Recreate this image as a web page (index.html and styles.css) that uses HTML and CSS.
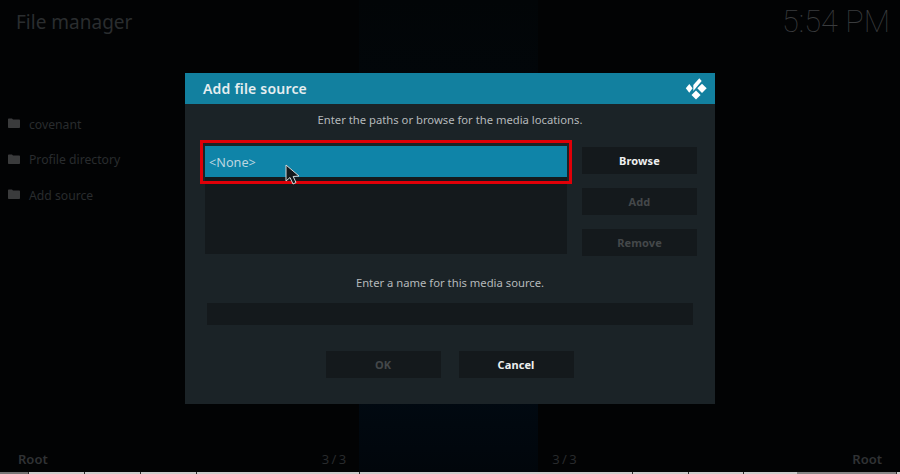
FILE: index.html
```html
<!DOCTYPE html>
<html lang="en">
  <head>
    <meta charset="UTF-8" />
    <meta name="viewport" content="width=device-width, initial-scale=1.0" />
    <title>Add file source</title>
    <link rel="stylesheet" href="styles.css">
  </head>
  <body>
    <div class="screen">
      <div class="backdrop-panel"></div>

      <div class="page">
        <div class="topbar">
          <div class="page-title">File manager</div>
          <div class="clock">5:54 PM</div>
        </div>

        <div class="sources">
          <div class="source">
            <svg class="folder" viewBox="0 0 12 10"><path d="M0 1.5 C0 .8 .4 .5 1 .5 H4 L5 1.6 H11 C11.6 1.6 12 2 12 2.6 V9 C12 9.6 11.6 10 11 10 H1 C.4 10 0 9.6 0 9 Z" /></svg>
            <span>covenant</span>
          </div>
          <div class="source">
            <svg class="folder" viewBox="0 0 12 10"><path d="M0 1.5 C0 .8 .4 .5 1 .5 H4 L5 1.6 H11 C11.6 1.6 12 2 12 2.6 V9 C12 9.6 11.6 10 11 10 H1 C.4 10 0 9.6 0 9 Z" /></svg>
            <span>Profile directory</span>
          </div>
          <div class="source">
            <svg class="folder" viewBox="0 0 12 10"><path d="M0 1.5 C0 .8 .4 .5 1 .5 H4 L5 1.6 H11 C11.6 1.6 12 2 12 2.6 V9 C12 9.6 11.6 10 11 10 H1 C.4 10 0 9.6 0 9 Z" /></svg>
            <span>Add source</span>
          </div>
        </div>

        <div class="footer">
          <span class="footer-path">Root</span>
          <span class="footer-count">3 / 3</span>
          <span class="footer-count footer-count-right">3 / 3</span>
          <span class="footer-path footer-path-right">Root</span>
        </div>
        <div class="strip"></div>
      </div>

      <div class="dialog">
        <div class="dialog-header">
          <h1>Add file source</h1>
          <svg class="logo" viewBox="0 0 22 22">
            <path d="M0.8 10.3 L4.3 6 L7.6 10.3 L4.3 14.8 Z" />
            <path d="M8.3 7 L14.3 0.3 L16.7 3 L8.3 13 Z" />
            <path d="M12.3 10.3 L17 5.7 L21.7 10.3 L17 15 Z" />
            <path d="M6.5 17 L11 12.4 L15.6 17 L11 21.6 Z" />
          </svg>
        </div>

        <div class="dialog-body">
          <p class="hint">Enter the paths or browse for the media locations.</p>

          <div class="paths-row">
            <div class="paths">
              <div class="path-selected">&lt;None&gt;</div>
            </div>
            <div class="side-buttons">
              <button class="btn">Browse</button>
              <button class="btn btn-off">Add</button>
              <button class="btn btn-off">Remove</button>
            </div>
          </div>

          <p class="hint hint-name">Enter a name for this media source.</p>
          <div class="name-input"></div>

          <div class="dialog-actions">
            <button class="btn btn-off">OK</button>
            <button class="btn">Cancel</button>
          </div>
        </div>

        <div class="callout"></div>
      </div>

      <svg class="cursor" viewBox="0 0 16 24">
        <path d="M1 1 L1 17 L5 13.5 L8 20 L11 18.5 L8.2 12.5 L14 12 Z" />
      </svg>
    </div>
  </body>
</html>
```

FILE: styles.css
```css
body {
  margin: 0;
  background-color: #000;
  font-family: "Noto Sans", "Open Sans", sans-serif;
}
.screen {
  position: relative;
  width: 900px;
  height: 474px;
  overflow: hidden;
  background-color: #020304;
}
.backdrop-panel {
  position: absolute;
  top: 0;
  left: 359px;
  width: 179px;
  height: 472px;
  background-image: linear-gradient(#020507, #010a13 80%, #01060b);
}
.page {
  position: relative;
  display: flex;
  flex-direction: column;
  height: 474px;
}
.topbar {
  display: flex;
  justify-content: space-between;
  align-items: flex-start;
  height: 100px;
  padding: 0 10px 0 16px;
}
.page-title {
  margin-top: 7px;
  font-size: 19px;
  line-height: 30px;
  color: #2a2d2f;
}
.clock {
  margin-top: 4px;
  font-family: Roboto, sans-serif;
  font-weight: 100;
  font-size: 30.7px;
  line-height: 36px;
  color: #3a3c3e;
}
.sources {
  display: flex;
  flex-direction: column;
  gap: 15.5px;
  padding: 14px 0 0 8px;
}
.source {
  display: flex;
  align-items: center;
  gap: 9px;
  height: 20px;
  font-size: 12.2px;
  color: #292c2e;
}
.folder {
  width: 12px;
  height: 10px;
  fill: #3a3b3c;
  margin-top: -2px;
}
.footer {
  display: flex;
  align-items: center;
  margin-top: auto;
  height: 20px;
  padding: 0 18px;
  font-size: 13px;
  color: #303234;
}
.footer-path {
  font-weight: 600;
}
.footer-count {
  margin-left: 274px;
  word-spacing: -1px;
  color: #282a2c;
}
.footer-count-right {
  margin-left: 206px;
}
.footer-path-right {
  margin-left: auto;
}
.strip {
  height: 2px;
  margin-top: 3px;
  background-image: linear-gradient(90deg,
    #777 0 28px, #333 28px 29px,
    #ccc 29px 84px, #333 84px 85px,
    #ccc 85px 140px, #333 140px 141px,
    #ccc 141px 196px, #333 196px 197px,
    #ccc 197px 359px, #333 359px 360px,
    #ccc 360px 632px, #333 632px 633px,
    #ccc 633px 688px, #333 688px 689px,
    #ccc 689px 743px, #333 743px 744px,
    #ccc 744px 797px, #888 797px 896px,
    #333 896px 897px, #ccc 897px 900px);
}
.dialog {
  position: absolute;
  top: 73px;
  left: 185px;
  width: 530px;
  height: 331px;
  background-color: #1b2327;
}
.dialog-header {
  display: flex;
  justify-content: space-between;
  align-items: center;
  height: 31px;
  padding: 0 8px 0 18px;
  background-color: #12809f;
}
h1 {
  margin: 0;
  font-size: 14px;
  font-weight: 600;
  letter-spacing: 0.2px;
  color: #e6eef0;
}
.logo {
  width: 22px;
  height: 22px;
  fill: #fff;
}
.dialog-body {
  padding: 0 20px;
}
.hint {
  margin: 0;
  height: 31px;
  font-size: 11.25px;
  line-height: 31px;
  text-align: center;
  color: #b5b9bb;
}
.paths-row {
  display: flex;
  justify-content: space-between;
  margin-top: 11px;
}
.paths {
  width: 362px;
  height: 108px;
  background-color: #14191c;
}
.path-selected {
  height: 31px;
  padding-left: 4px;
  font-size: 12.7px;
  line-height: 32px;
  color: #bcd6e0;
  background-color: #0f84a8;
}
.side-buttons {
  display: flex;
  flex-direction: column;
  gap: 14px;
  margin: 1px -2px 0 0;
}
.btn {
  display: block;
  width: 115px;
  height: 27px;
  padding: 0;
  border: none;
  font-family: inherit;
  font-size: 11px;
  font-weight: 700;
  letter-spacing: 0.1px;
  color: #eef0f0;
  background-color: #14191c;
}
.btn-off {
  color: #44484a;
}
.hint-name {
  height: 20px;
  margin-top: 17px;
  line-height: 20px;
}
.name-input {
  height: 22px;
  margin: 10px 2px 0;
  background-color: #14191c;
}
.dialog-actions {
  display: flex;
  justify-content: center;
  gap: 18px;
  margin-top: 26px;
  padding-right: 1px;
}
.callout {
  position: absolute;
  top: 67px;
  left: 15px;
  width: 366px;
  height: 38px;
  border: 3px solid #e00008;
}
.cursor {
  position: absolute;
  top: 164px;
  left: 285px;
  width: 16px;
  height: 24px;
  fill: #15191b;
  stroke: #d8d8d8;
  stroke-width: 1;
}
```
